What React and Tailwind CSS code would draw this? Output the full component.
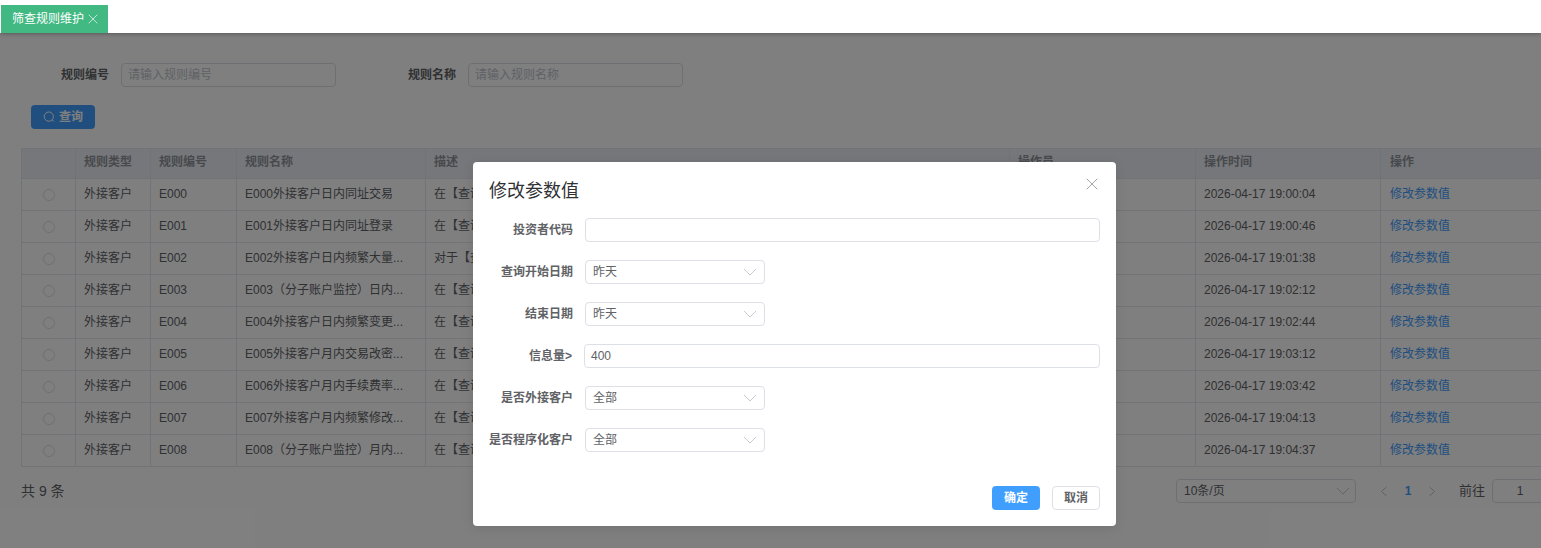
import { X } from "lucide-react";

const rows = [
  ["E000", "E000外接客户日内同址交易", "在【查询", "19:00:04"],
  ["E001", "E001外接客户日内同址登录", "在【查询", "19:00:46"],
  ["E002", "E002外接客户日内频繁大量...", "对于【查询", "19:01:38"],
  ["E003", "E003（分子账户监控）日内...", "在【查询", "19:02:12"],
  ["E004", "E004外接客户日内频繁变更...", "在【查询", "19:02:44"],
  ["E005", "E005外接客户月内交易改密...", "在【查询", "19:03:12"],
  ["E006", "E006外接客户月内手续费率...", "在【查询", "19:03:42"],
  ["E007", "E007外接客户月内频繁修改...", "在【查询", "19:04:13"],
  ["E008", "E008（分子账户监控）月内...", "在【查询", "19:04:37"],
];

function Caret() {
  return (
    <svg width="14" height="8" viewBox="0 0 14 8" fill="none" stroke="#c0c4cc" strokeWidth="0.9">
      <path d="M1 1l6 6 6-6" />
    </svg>
  );
}

function SelectBox({ value }) {
  return (
    <div className="w-[180px] h-6 border border-[#dcdfe6] rounded-[4px] bg-white flex items-center justify-between pl-[7px] pr-[7px] text-[12px] text-[#606266]">
      <span>{value}</span>
      <Caret />
    </div>
  );
}

function FormRow({ label, children }) {
  return (
    <div className="flex items-center h-6 mb-[18px]">
      <label className="w-[84px] text-right font-bold text-[12px] text-[#606266] whitespace-nowrap mr-3">{label}</label>
      {children}
    </div>
  );
}

export default function App() {
  return (
    <div className="relative w-[1541px] h-[548px] overflow-hidden bg-white font-['Liberation_Sans','Noto_Sans_CJK_SC',sans-serif] text-[12px] text-[#606266]">
      {/* tab bar sits above the mask */}
      <div className="relative z-30 h-[33px] bg-white shadow-[0_1px_4px_rgba(0,0,0,0.3)] flex items-end pl-px">
        <div className="h-7 w-[107px] bg-[#42b983] text-white flex items-center pl-[11px]">
          <span>筛查规则维护</span>
          <X size={16} strokeWidth={1} className="ml-px" />
        </div>
      </div>

      <div className="pt-[30px]">
        <div className="flex items-center h-6 text-[12px]">
          <label className="w-[109px] text-right font-bold">规则编号</label>
          <div className="ml-3 w-[215px] h-6 border border-[#dcdfe6] rounded-[4px] pl-[6px] flex items-center text-[#c0c4cc]">请输入规则编号</div>
          <label className="ml-[72px] font-bold">规则名称</label>
          <div className="ml-3 w-[215px] h-6 border border-[#dcdfe6] rounded-[4px] pl-[6px] flex items-center text-[#c0c4cc]">请输入规则名称</div>
        </div>

        <div className="mt-[18px] ml-[31px]">
          <button className="w-16 h-6 rounded-[4px] bg-[#409eff] text-white font-bold flex items-center justify-center gap-1">
            <svg width="12" height="12" viewBox="0 0 12 12" fill="none" stroke="currentColor" strokeWidth="1">
              <circle cx="5.8" cy="5.6" r="4.6" />
              <path d="M9.2 8.8l1.6 1.8" />
            </svg>
            查询
          </button>
        </div>

        <table className="mt-[19px] ml-[21px] w-[1560px] table-fixed border-collapse text-[12px]">
          <colgroup>
            <col className="w-[54px]" />
            <col className="w-[75px]" />
            <col className="w-[86px]" />
            <col className="w-[189px]" />
            <col className="w-[584px]" />
            <col className="w-[186px]" />
            <col className="w-[185px]" />
            <col />
          </colgroup>
          <thead>
            <tr className="h-[30px] bg-[#ebeff6] text-[#909399] font-bold">
              <th className="border border-[#e4e7ed]" />
              {["规则类型", "规则编号", "规则名称", "描述", "操作员", "操作时间"].map((h) => (
                <th key={h} className="border border-[#e4e7ed] text-left pl-2 pb-1 font-bold">{h}</th>
              ))}
              <th className="border border-[#e4e7ed] text-left pl-[9px] pb-1 font-bold">操作</th>
            </tr>
          </thead>
          <tbody>
            {rows.map((r) => (
              <tr key={r[0]} className="h-8">
                <td className="border border-[#e4e7ed]">
                  <div className="w-3 h-3 mx-auto rounded-full border border-[#dcdfe6]" />
                </td>
                <td className="border border-[#e4e7ed] pl-2 pb-[2px]">外接客户</td>
                <td className="border border-[#e4e7ed] pl-2 pb-[2px]">{r[0]}</td>
                <td className="border border-[#e4e7ed] pl-2 pb-[2px] whitespace-nowrap">{r[1]}</td>
                <td className="border border-[#e4e7ed] pl-2 pb-[2px]">{r[2]}</td>
                <td className="border border-[#e4e7ed] pl-2 pb-[2px]" />
                <td className="border border-[#e4e7ed] pl-2 pb-[2px]">2026-04-17 {r[3]}</td>
                <td className="border border-[#e4e7ed] pl-[9px] pb-[2px] text-[#409eff]">修改参数值</td>
              </tr>
            ))}
          </tbody>
        </table>

        <div className="mt-3 pl-[21px] flex items-center h-6 -mr-[7px]">
          <span className="text-[14px]">共 9 条</span>
          <div className="ml-auto flex items-center">
            <div className="w-[180px] h-6 border border-[#dcdfe6] rounded-[4px] flex items-center justify-between pl-[7px] pr-[5px]">
              <span>10条/页</span>
              <Caret />
            </div>
            <div className="ml-4 w-6 flex justify-center">
              <svg width="8" height="11" viewBox="0 0 8 11" fill="none" stroke="#c0c4cc" strokeWidth="1">
                <path d="M6.5 1L1.5 5.5l5 4.5" />
              </svg>
            </div>
            <span className="w-6 text-center font-bold text-[#409eff]">1</span>
            <div className="w-6 flex justify-center">
              <svg width="8" height="11" viewBox="0 0 8 11" fill="none" stroke="#c0c4cc" strokeWidth="1">
                <path d="M1.5 1l5 4.5-5 4.5" />
              </svg>
            </div>
            <span className="ml-[15px] text-[13px]">前往</span>
            <div className="ml-[7px] w-14 h-6 border border-[#dcdfe6] rounded-[4px] flex items-center justify-center">1</div>
          </div>
        </div>
      </div>

      {/* dialog mask */}
      <div className="absolute inset-x-0 top-[33px] bottom-0 z-10 bg-black/50" />

      <div className="absolute z-20 left-[473px] top-[162px] w-[643px] h-[364px] bg-white rounded-[4px] shadow-[0_2px_12px_rgba(0,0,0,0.1)] pt-[17px] px-4">
        <div className="text-[18px] leading-6 text-[#303133]">修改参数值</div>
        <button className="absolute right-[14px] top-[12px] text-[#909399]">
          <X size={20} strokeWidth={1} />
        </button>
        <div className="mt-[15px]">
          <FormRow label="投资者代码">
            <div className="w-[515px] h-6 border border-[#dcdfe6] rounded-[4px]" />
          </FormRow>
          <FormRow label="查询开始日期">
            <SelectBox value="昨天" />
          </FormRow>
          <FormRow label="结束日期">
            <SelectBox value="昨天" />
          </FormRow>
          <FormRow label={<span className="pr-px">信息量&gt;</span>}>
            <div className="w-[516px] -ml-px h-6 border border-[#dcdfe6] rounded-[4px] flex items-center pl-[6px]">400</div>
          </FormRow>
          <FormRow label="是否外接客户">
            <SelectBox value="全部" />
          </FormRow>
          <FormRow label="是否程序化客户">
            <SelectBox value="全部" />
          </FormRow>
        </div>
        <div className="flex justify-end gap-3 mt-[34px]">
          <button className="w-12 h-6 rounded-[4px] bg-[#409eff] text-white font-bold">确定</button>
          <button className="w-12 h-6 rounded-[4px] border border-[#dcdfe6] text-[#606266] font-bold">取消</button>
        </div>
      </div>
    </div>
  );
}
